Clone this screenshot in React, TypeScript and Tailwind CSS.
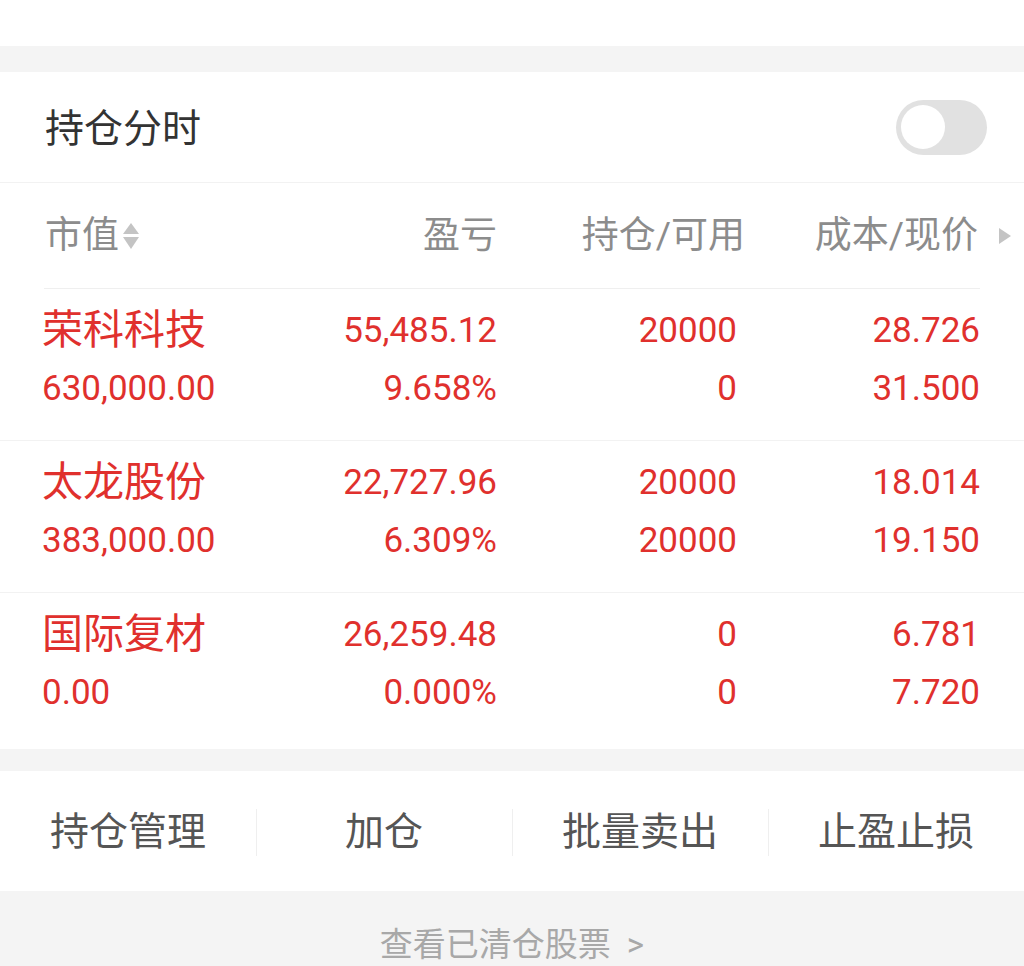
import React from 'react';

type Holding = {
  name: string;
  value: string;
  profit: string;
  ratio: string;
  hold: string;
  avail: string;
  cost: string;
  price: string;
};

const holdings: Holding[] = [
  { name: '荣科科技', value: '630,000.00', profit: '55,485.12', ratio: '9.658%', hold: '20000', avail: '0', cost: '28.726', price: '31.500' },
  { name: '太龙股份', value: '383,000.00', profit: '22,727.96', ratio: '6.309%', hold: '20000', avail: '20000', cost: '18.014', price: '19.150' },
  { name: '国际复材', value: '0.00', profit: '26,259.48', ratio: '0.000%', hold: '0', avail: '0', cost: '6.781', price: '7.720' },
];

const actions = ['持仓管理', '加仓', '批量卖出', '止盈止损'];

const font = "font-['Roboto','Noto_Sans_CJK_SC',sans-serif]";
const grid = 'grid grid-cols-[215px_240px_240px_243px] pl-[42px] pr-[44px]';

function Toggle() {
  return (
    <div className="w-[91px] h-[55px] rounded-full bg-[#e1e1e1] flex items-center pl-[5px]">
      <div className="w-[44px] h-[44px] rounded-full bg-white" />
    </div>
  );
}

function HoldingRow({ h, last }: { h: Holding; last: boolean }) {
  return (
    <div className={`${grid} pt-[12px] ${last ? 'pb-[28px]' : 'pb-[23px] border-b border-[#f2f2f2]'} text-[#e0302d]`}>
      <div className="flex flex-col">
        <span className="h-[58px] flex items-center text-[41px] leading-none">{h.name}</span>
        <span className="h-[58px] flex items-center text-[35px] leading-none">{h.value}</span>
      </div>
      <div className="flex flex-col items-end">
        <span className="h-[58px] flex items-center text-[35px] leading-none">{h.profit}</span>
        <span className="h-[58px] flex items-center text-[35px] leading-none">{h.ratio}</span>
      </div>
      <div className="flex flex-col items-end">
        <span className="h-[58px] flex items-center text-[35px] leading-none">{h.hold}</span>
        <span className="h-[58px] flex items-center text-[35px] leading-none">{h.avail}</span>
      </div>
      <div className="flex flex-col items-end">
        <span className="h-[58px] flex items-center text-[35px] leading-none">{h.cost}</span>
        <span className="h-[58px] flex items-center text-[35px] leading-none">{h.price}</span>
      </div>
    </div>
  );
}

export default function App() {
  return (
    <div className={`${font} w-[1024px] h-[966px] bg-[#f4f4f4] overflow-hidden`}>
      <div className="h-[46px] bg-white" />
      <div className="h-[26px]" />

      <div className="bg-white">
        {/* 持仓分时 */}
        <div className="h-[111px] flex items-center justify-between pl-[45px] pr-[37px] border-b border-[#f2f2f2]">
          <span className="text-[39px] text-[#333] leading-none pt-[4px]">持仓分时</span>
          <Toggle />
        </div>

        {/* header */}
        <div>
          <div className={`${grid} h-[105px] items-center text-[37px] text-[#8c8c8c] leading-none`}>
            <div className="flex items-center pl-[3px]">
              <span>市值</span>
              <svg width="18" height="32" viewBox="0 0 18 32" className="ml-[3px]">
                <path d="M9 3 L17 14 L1 14 Z" fill="#c4c4c4" />
                <path d="M1 17 L17 17 L9 29 Z" fill="#c4c4c4" />
              </svg>
            </div>
            <div className="text-right">盈亏</div>
            <div className="text-right -mr-[8px]">持仓/可用</div>
            <div className="relative text-right">
              <span className="pr-[2px]">成本/现价</span>
              <svg width="14" height="18" viewBox="0 0 14 18" className="absolute right-[-32px] top-1/2 -translate-y-1/2">
                <path d="M1 1 L13 9 L1 17 Z" fill="#c4c4c4" />
              </svg>
            </div>
          </div>
          <div className="mx-[44px] h-px bg-[#efefef]" />
        </div>

        {holdings.map((h, i) => (
          <HoldingRow key={h.name} h={h} last={i === holdings.length - 1} />
        ))}
      </div>

      <div className="h-[22px]" />

      {/* actions */}
      <div className="bg-white h-[120px] grid grid-cols-4 items-center">
        {actions.map((a, i) => (
          <div key={a} className="relative flex items-center justify-center h-full">
            {i > 0 && <div className="absolute left-0 top-[38px] h-[47px] w-px bg-[#efefef]" />}
            <span className="text-[39px] text-[#555] leading-none pt-[2px]">{a}</span>
          </div>
        ))}
      </div>

      <div className="flex justify-center pt-[37px]">
        <span className="text-[33px] text-[#a8a8a8] leading-none">
          查看已清仓股票<span className="ml-[16px]">&gt;</span>
        </span>
      </div>
    </div>
  );
}
